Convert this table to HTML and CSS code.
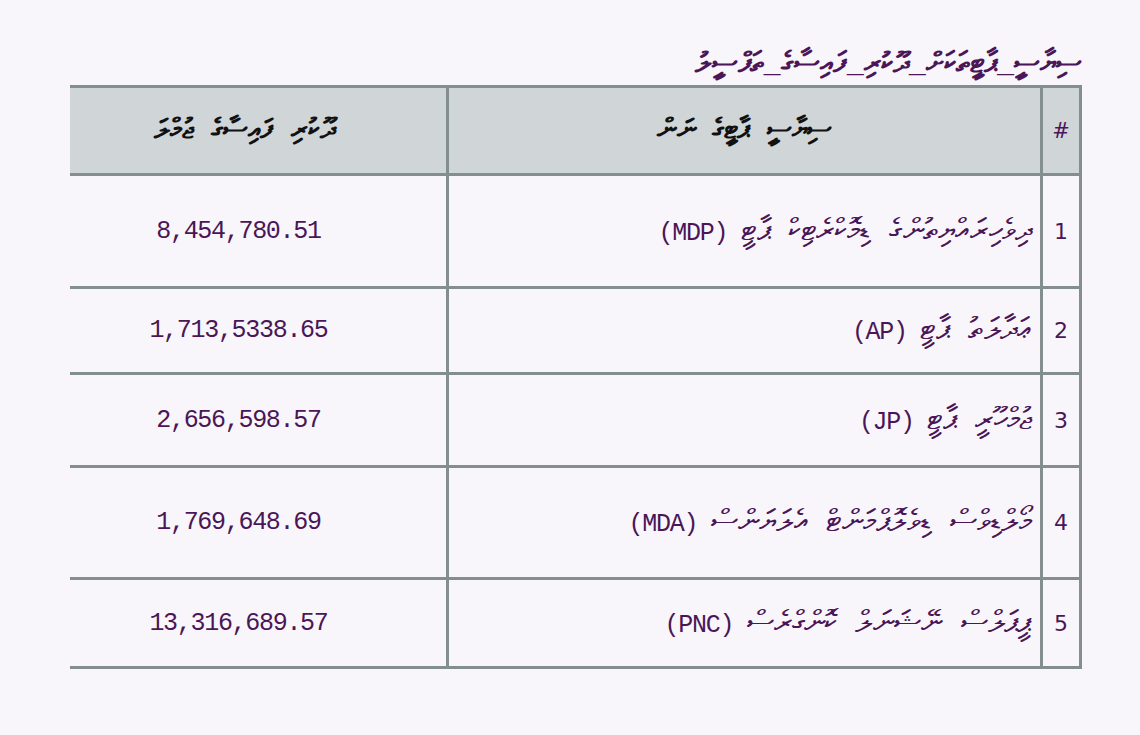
FILE: index.html
```html
<!DOCTYPE html>
<html lang="dv" dir="rtl">
<head>
<meta charset="utf-8">
<link rel="stylesheet" href="styles.css">
</head>
<body>
<div class="page">
  <h1 class="title">ސިޔާސީ_ޕާޓީތަކަށް_ދޫކުރި_ފައިސާގެ_ތަފްސީލު</h1>
  <table class="grid">
    <thead>
      <tr class="head">
        <th class="num">#</th>
        <th class="name">ސިޔާސީ ޕާޓީގެ ނަން</th>
        <th class="amt">ދޫކުރި ފައިސާގެ ޖުމްލަ</th>
      </tr>
    </thead>
    <tbody>
      <tr class="r1">
        <td class="num">1</td>
        <td class="name"><span class="tn">ދިވެހިރައްޔިތުންގެ ޑިމޮކްރެޓިކް ޕާޓީ</span> (MDP)</td>
        <td class="amt">8,454,780.51</td>
      </tr>
      <tr class="r2">
        <td class="num">2</td>
        <td class="name"><span class="tn">ޢަދާލަތު ޕާޓީ</span> (AP)</td>
        <td class="amt">1,713,5338.65</td>
      </tr>
      <tr class="r3">
        <td class="num">3</td>
        <td class="name"><span class="tn">ޖުމްހޫރީ ޕާޓީ</span> (JP)</td>
        <td class="amt">2,656,598.57</td>
      </tr>
      <tr class="r4">
        <td class="num">4</td>
        <td class="name"><span class="tn">މޯލްޑިވްސް ޑިވެލޮޕްމަންޓް އެލަޔަންސް</span> (MDA)</td>
        <td class="amt">1,769,648.69</td>
      </tr>
      <tr class="r5">
        <td class="num">5</td>
        <td class="name"><span class="tn">ޕީޕަލްސް ނޭޝަނަލް ކޮންގްރެސް</span> (PNC)</td>
        <td class="amt">13,316,689.57</td>
      </tr>
    </tbody>
  </table>
</div>
</body>
</html>
```
FILE: styles.css
```css
html, body {
  margin: 0;
  padding: 0;
  background: #f9f6fb;
}
.page {
  padding: 43px 58px 0 68px;
  color: #4a1657;
  font-family: "Liberation Mono", "DejaVu Sans Mono", monospace;
}
.title {
  margin: 0 0 -1px 0;
  font-size: 28.5px;
  font-weight: bold;
  line-height: 43px;
  text-align: right;
  color: #4a1657;
}
.grid {
  width: 1012px;
  border-collapse: collapse;
  font-size: 25px;
  letter-spacing: -1.3px;
}
.grid th, .grid td {
  border-top: 3px solid #838f8f;
  border-bottom: 3px solid #838f8f;
  padding: 0 10px;
}
.grid .num {
  width: 22px;
  text-align: center;
  border-left: 3px solid #838f8f;
  border-right: 3px solid #838f8f;
  font-family: "DejaVu Sans", sans-serif;
  font-size: 22px;
  letter-spacing: 0;
  padding: 0 7px;
}
.grid .name {
  text-align: right;
  border-left: 3px solid #838f8f;
  width: 574px;
}
.grid td.name {
  padding-right: 8px;
}
.tn {
  font-size: 31px;
  letter-spacing: 0;
}
.grid .amt {
  text-align: center;
  width: 338px;
  padding: 0 39px 0 0;
}
.grid th.amt {
  padding: 0 27px 0 0;
}
.head {
  background: #d0d5d8;
  height: 88px;
}
.head th {
  color: #111;
  font-weight: bold;
  font-size: 28px;
  letter-spacing: 0;
}
.head th.name, .head th.amt {
  text-align: center;
}
.head th.num {
  color: #4a1657;
  font-weight: normal;
  font-size: 21px;
}
.r1 { height: 113px; }
.r2 { height: 86px; }
.r3 { height: 93px; }
.r4 { height: 112px; }
.r5 { height: 89px; }
```
